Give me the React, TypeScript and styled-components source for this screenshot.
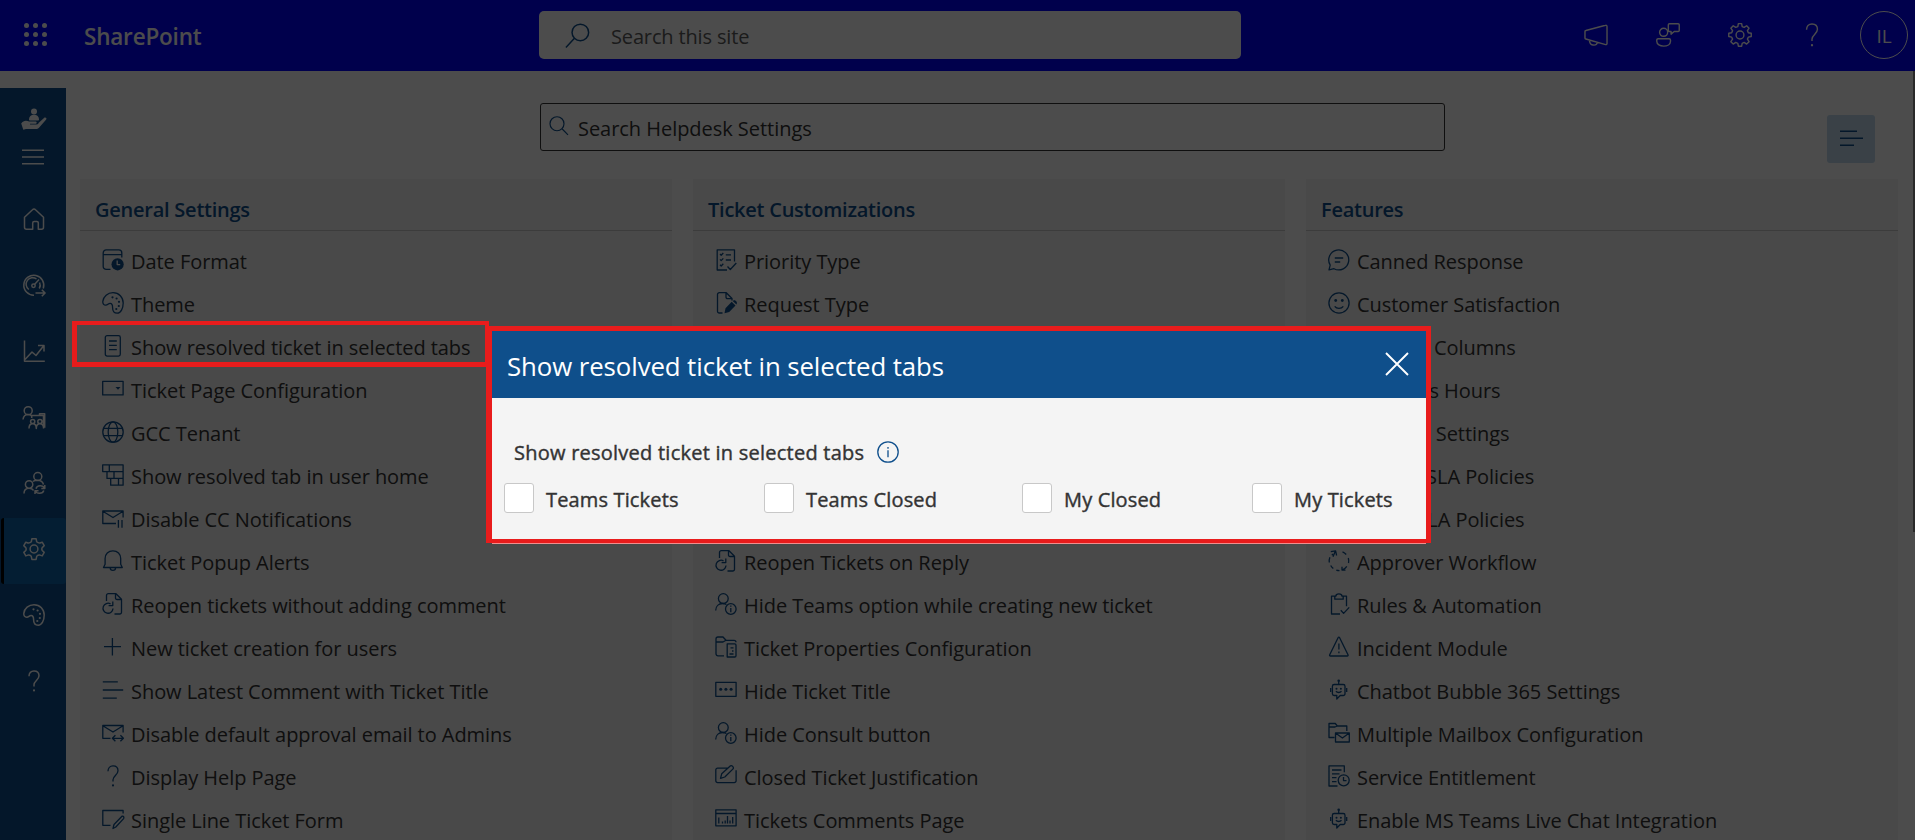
import React from "react";
import styled, { createGlobalStyle } from "styled-components";

const brand = "#0f4f8c";

const GlobalStyle = createGlobalStyle`
  html, body { margin: 0; padding: 0; overflow: hidden; }
  *, *::before, *::after { box-sizing: border-box; }
  body { font-family: "Open Sans", "Noto Sans", sans-serif; background: #fff; }
  svg { display: block; flex: none; overflow: visible; }
`;

/* ---------- icons ---------- */

const Svg = styled.svg<{ $w?: number }>`
  fill: none;
  stroke: currentColor;
  stroke-width: ${(p) => p.$w ?? 1.3};
  stroke-linejoin: round;
  .solid { fill: currentColor; stroke: none; }
  .cut { stroke: #f4f4f4; }
`;

const palette = (
  <>
    <path d="M.8 9.4C1.3 4.4 5.8.7 11 .7c6 0 10.2 4.600 10.200 10.400 0 5.200-2.400 10.100-6 10.100-3.500 0-4.600-2.600-4.600-5.500 0-3.200-.9-4.300-2.500-4.300-2 0-2.300 1.800-4.300 1.800C1.700 13.200.6 11.500.8 9.400z" />
    <g className="solid">
      <circle cx="10.500" cy="5.300" r="1.100" /><circle cx="14.600" cy="6.500" r="1.100" /><circle cx="17" cy="9.800" r="1.100" />
      <circle cx="16.800" cy="14" r="1.100" /><circle cx="14.300" cy="17" r="1.100" />
    </g>
  </>
);
const question = (
  <>
    <path d="M6 6.300C6 3 8 .9 11 .9s5 2 5 4.900c0 4.200-5 5.200-5 9v1.600" />
    <circle className="solid" cx="11" cy="20.400" r="1.050" />
  </>
);
const reopen = (
  <>
    <path d="M4.500 8V2.500A1.800 1.800 0 0 1 6.300.7H14l5.500 5.500v13a1.800 1.800 0 0 1-1.800 1.800H12.500M13.500.9v4c0 1 .6 1.600 1.600 1.600h4" />
    <path d="M8.500 10.900A5 5 0 1 0 11 15.500M10.800 8.600v4H6.600" />
  </>
);
const personInfo = (
  <>
    <circle cx="8.300" cy="5.600" r="4.900" />
    <path d="M.7 17.500c0-4.300 3-7 7-7 1.500 0 2.700.4 3.700 1" />
    <circle cx="15.800" cy="16" r="5.300" />
    <path d="M15.800 15v4.200M15.800 12.600v1.200" />
  </>
);
const bot = (
  <>
    <path d="M6.200 5.500h9a1.800 1.800 0 0 1 1.800 1.800v7.400a1.800 1.800 0 0 1-1.800 1.800h-3L8.800 20v-3.500H6.200a1.800 1.800 0 0 1-1.800-1.800V7.300a1.800 1.800 0 0 1 1.800-1.800z" />
    <path d="M10.700 5.500V2.500M2.700 9v4M18.700 9v4M7.900 12.300c1.400 1.600 4.200 1.600 5.600 0" />
    <g className="solid"><circle cx="10.700" cy="1.700" r="1.300" /><circle cx="8.500" cy="9.700" r="1" /><circle cx="12.900" cy="9.700" r="1" /></g>
  </>
);

const icons: Record<string, React.ReactNode> = {
  palette, question, reopen, personInfo, bot,
  date: (
    <>
      <path d="M8.500 20.400H4.200A3 3 0 0 1 1.200 17.400V3.900a3 3 0 0 1 3-3h12.600a3 3 0 0 1 3 3V8.500M1.200 5.600h18.600" />
      <circle className="solid" cx="15.600" cy="15.300" r="6.100" />
      <path className="cut" d="M15.200 11.600v4h3" />
    </>
  ),
  doc: (
    <>
      <rect x="3.300" y=".7" width="15" height="20.400" rx="1.800" />
      <path d="M7 6h7.800M7 10.300h7.800M7 14.600h7.800" />
    </>
  ),
  dropdown: (
    <>
      <rect x=".7" y="3.300" width="20.400" height="13.600" />
      <path className="solid" d="M13.500 9h5l-2.500 2.700z" />
    </>
  ),
  globe: (
    <>
      <circle cx="11" cy="11" r="10.200" /><ellipse cx="11" cy="11" rx="4.800" ry="10.200" />
      <path d="M1.500 7.300h19M1.500 14.700h19" />
    </>
  ),
  bricks: <path d="M.7.8h20.400v20.400H8.700v-6.800H5V7.600H.7zM.7 7.600h20.400M5 14.400h16.100M7.300.8v6.800M12 7.600v6.800M16.500 14.400v6.800" />,
  mailPause: <path d="M14 16.500H.8V4h20.300v6.500M.8 4.200l10.200 6.300 10.100-6.300M16.400 13v7.800M20 13v7.800" />,
  bell: <path d="M1.500 17.500h18.800l-1.600-3.200V8.500C18.700 4 15.500.9 10.900.9S3.100 4 3.100 8.500v5.800zM8.200 17.800c0 3.500 5.400 3.500 5.400 0" />,
  plus: <path d="M10.400 2v17.500M2 10.700h17" />,
  lines: <path d="M.8 2.800h15M.8 11h20.400M.8 19.200h14" />,
  mailArrows: <path d="M8.500 16.300H.8V3.500h20.300v7M.8 3.700l10.200 6.300 10.100-6.300M10.700 16.300h10.500M13.400 13.300l-3 3 3 3M18.400 13.300l3 3-3 3" />,
  windowPen: <path d="M8.500 17.300H.8V2.500h20.300v3M11 20.500l1-4 8-8.300c1.800-.5 2.200 1.500 1.600 2.400L13.800 19z" />,
  checklist: (
    <path d="M12 21H2.200V.8h17.300V12.500M5 5l1.200 1.200L8.300 4M5 10.400l1.200 1.200 2.100-2.200M5 15.800 6.200 17l2.100-2.200M10.800 5.800H16M10.800 11H16M12.500 17.500l2.800 3 6-6.500" />
  ),
  docPen: (
    <>
      <path d="M7.500 21H4.300a1.800 1.800 0 0 1-1.800-1.800V2.500A1.800 1.800 0 0 1 4.300.7h7L17 6.500v2M11 .9v4.200c0 1 .6 1.600 1.600 1.600H17" />
      <path className="solid" d="M9.500 21.200l1-5 6.200-6.500 3.800 3.800-6.300 6.400zM17.700 8.900c2-2 5.600 1.200 3.700 3.500z" />
    </>
  ),
  folderDoc: <path d="M9 19.800H3a2 2 0 0 1-2-2V3a2 2 0 0 1 2-2h5l3 3.300h8a2 2 0 0 1 2 2M1 6h7l3-1.700M12.200 7.800h7.500a1.300 1.300 0 0 1 1.300 1.300v10.600a1.300 1.300 0 0 1-1.300 1.300h-7.500zM15.500 11.800h3M17 15h1.500M14.500 18h4" />,
  dots: (
    <>
      <rect x=".8" y="3.300" width="20.300" height="14" />
      <g className="solid"><circle cx="5.700" cy="10.300" r="1.500" /><circle cx="10.900" cy="10.300" r="1.500" /><circle cx="16.100" cy="10.300" r="1.500" /></g>
    </>
  ),
  edit: <path d="M13 3.200H2.600A1.800 1.800 0 0 0 .8 5v10.800a1.800 1.800 0 0 0 1.800 1.800h16.700a1.800 1.800 0 0 0 1.800-1.800V5.200M5.500 13.300l1.200-4.500 8.800-8c1.600-.5 3.300 1.200 2.800 2.800L9.800 12z" />,
  chart: <path d="M.8 1.800h20.300v16H.8zM.8 5.500h20.300M3.800 15.500V9.500M7.500 15.500v-2M10.200 15.500v-3M12.500 15.500V8M15 15.500v-3M17.700 15.500V9" />,
  chat: <path d="M1 20.800l1.200-4.700A10 10 0 1 1 6 19.700zM6.800 9h8.400M6.800 13h5.400" />,
  smile: (
    <>
      <circle cx="11" cy="11" r="10.100" /><path d="M6.700 14.300c2 2.800 6.600 2.800 8.600 0" />
      <circle className="solid" cx="7.700" cy="8.500" r="1.400" /><circle className="solid" cx="14.300" cy="8.500" r="1.400" />
    </>
  ),
  cycle: (
    <>
      <path d="M7.300 1.200 5 6.800M2.800 1.700l4.800-.9 1 4.700" />
      <path d="M14.500 1.900a9.800 9.800 0 0 1 3.700 2.600M20.300 8a9.800 9.800 0 0 1 .2 5M18.800 16.300a9.800 9.800 0 0 1-4.500 3.600M14 16.800v3.300h3.500M11.500 20.700a9.800 9.800 0 0 1-3.200-.5M5.300 18.500a9.800 9.800 0 0 1-2.600-3M1.300 12.500a9.800 9.800 0 0 1 .6-5.200M5.200 3.900 3.800 5.200" />
    </>
  ),
  clipboard: <path d="M12 21H3.500V3.200h4.300C8 .2 13.800.2 14 3.200h4.500v10M6.800 3.200v3h8.400v-3M12.800 17.200l2.800 3.200 5.600-6" />,
  warning: <path d="M10.200 1.500c.3-.6 1-.6 1.300 0L20 18.700c.4.8 0 1.300-.8 1.300H2.500c-.8 0-1.200-.5-.8-1.300zM10.900 7.500v6M10.900 15.500v1.800" />,
  folderMail: <path d="M6.500 15.500H1V1.500h6.300l2 2.500h9.500v5M1 5h6l2.300-1M7.500 11h13.800v9H7.500zM7.500 11l6.900 5 6.900-5" />,
  docClock: <path d="M9.500 21H1V.8h15.300v6.500M4 5h9.500M4 8.800h7.500M4 12.700h4.500M4 16.600h4.500M21.200 15.300a5.500 5.500 0 1 1-11 0 5.500 5.500 0 0 1 11 0zM15.500 12v3.600h3" />,
  home: <path d="M1.500 9.300 9.500 1.700c.9-.9 2.100-.9 3 0l8 7.600v9.900a2 2 0 0 1-2 2h-3.200v-6.300a1.500 1.500 0 0 0-1.500-1.500h-2.600a1.500 1.500 0 0 0-1.500 1.500v6.300H3.500a2 2 0 0 1-2-2z" />,
  gauge: (
    <>
      <path d="M20.300 14.500A10 10 0 1 0 11 21.300M5.800 15.500A6.500 6.500 0 0 1 13.500 5M16.600 8.500a6.500 6.500 0 0 1-.3 6M11.500 10.500l4.500-5M12.500 19h9.500M18.800 15.700l3.300 3.300-3.300 3.300" />
      <circle cx="10.500" cy="11.700" r="1.700" />
    </>
  ),
  trend: <path d="M1.500.5v20.700h20.300M2 19.500 9 12l4 3.500L20.500 6M15 5.500h6v6" />,
  team: <path d="M9.200 4.700a4 4 0 1 1-8 0 4 4 0 0 1 8 0zM0 13.500c.4-3.500 2.600-5 5.200-5 2 0 3.300.8 4 2M8.700 12V9.500h11.800v11M16.500 9.500V7.700h5.200v14M11.800 15.500a2.100 2.100 0 1 1-4.200 0 2.100 2.100 0 0 1 4.200 0zM19 15.500a2.100 2.100 0 1 1-4.200 0 2.100 2.100 0 0 1 4.200 0zM6 22.500c0-3 1.500-4.700 3.700-4.700s3.600 1.700 3.600 4.700c0-3 1.500-4.700 3.600-4.700s3.700 1.700 3.700 4.700" />,
  peopleSync: <path d="M18.800 4.500a4 4 0 1 1-8 0 4 4 0 0 1 8 0zM9.800 12.500a3.700 3.700 0 1 1-7.400 0 3.700 3.700 0 0 1 7.400 0zM1 21.500c0-3.300 2-5.300 5-5.300 2.200 0 3.700.8 4.500 2.300M10 9.500c1-.8 2.500-1.200 4.500-1.200 3.200 0 5.300 1.500 6 4.200M21.500 16.200c-1.500-3.200-7.500-3.200-8.500.5M21.800 13v3.500h-3.500M12.300 19c1.500 3.200 7.300 3.200 8.500-.5M12 22v-3.300h3.500" />,
  gear: (
    <>
      <circle cx="11" cy="11" r="3.900" />
      <path d="M8.900.7h4.200l.6 3.100c.9.9 2 1.400 3.300 1.200l2.200-.8 2 3.500-2 1.900c-.6 1-.6 1.900 0 2.900l2 1.900-2 3.500-2.200-.8c-1.300-.2-2.400.3-3.300 1.200l-.6 3.100H8.900l-.6-3.100c-.9-.9-2-1.400-3.300-1.200l-2.200.8-2-3.500 2-1.900c.6-1 .6-1.900 0-2.900l-2-1.900 2-3.500 2.200.8c1.300.2 2.400-.3 3.300-1.200z" />
    </>
  ),
  cog: (
    <>
      <circle cx="11" cy="11" r="3.600" />
      <path d="M9.500.6h3l.5 2.700 1.800.7 2.300-1.500 2.200 2.200-1.500 2.300.8 1.900 2.700.5v3l-2.700.6-.8 1.800 1.500 2.300-2.200 2.200-2.300-1.500-1.800.8-.5 2.700h-3L9 18.600l-1.900-.8-2.300 1.500-2.200-2.200 1.600-2.300-.8-1.800-2.700-.6v-3l2.700-.5.8-1.900-1.600-2.300 2.200-2.200L7.100 4 9 3.300z" />
    </>
  ),
  hand: (
    <g className="solid">
      <circle cx="12" cy="3.500" r="3" />
      <path d="M7 11.500c0-3 2-4.800 5-4.800s5 1.800 5 4.800c0 .6-.5 1-1 1H8c-.6 0-1-.4-1-1z" />
      <path d="M-.8 15.500c2-3 5-3.300 8-2h6c2 0 2 2.200 0 2.300H8v.7h6.500c1.500 0 2-.8 2-1.500l5.500-5c1.200-1 3.200 0 2.200 1.500l-7 8c-1 1-2 1.500-3.500 1.500H4l-2.700.8z" />
    </g>
  ),
  menu: <path d="M0 4.200h22M0 11h22M0 17.800h22" />,
  megaphone: (
    <path d="M1.700 6.900 19.800 2.100a1 1 0 0 1 1.300 1V18.800a1 1 0 0 1-1.300 1L1.700 14.700a1 1 0 0 1-.8-1V7.900a1 1 0 0 1 .8-1zM5 15.800c0 5.300 6.300 5.800 7.300 2" />
  ),
  feedback: (
    <path d="M10.700 8.500a3.700 3.700 0 1 1-7.400 0 3.700 3.700 0 0 1 7.400 0zM2 14.400h10a1.300 1.300 0 0 1 1.300 1.300v1c0 6-12.600 6-12.600 0v-1A1.300 1.300 0 0 1 2 14.400zM12.300.7h8a1 1 0 0 1 1 1v5.100a1 1 0 0 1-1 1h-3.600l-2.900 2.400V7.800h-1.500a1 1 0 0 1-1-1V1.700a1 1 0 0 1 1-1z" />
  ),
  searchLeft: <path d="M20.800 8.300a7.300 7.300 0 1 1-14.600 0 7.300 7.300 0 0 1 14.600 0zM8.300 13.500.8 21.500" />,
  searchRight: <path d="M16.500 8.500a7.700 7.700 0 1 1-15.400 0 7.700 7.700 0 0 1 15.400 0zM14.300 14l6.600 6.700" />,
  close: <path d="M0 0l22 22M22 0 0 22" />,
  info: (
    <>
      <circle cx="11" cy="11" r="10.200" /><path d="M11 9.300v7M11 6v1.700" />
    </>
  ),
};

const Icon = ({ name, size = 22, w }: { name: string; size?: number; w?: number }) => (
  <Svg width={size} height={size} viewBox="0 0 22 22" $w={w}>{icons[name]}</Svg>
);

/* ---------- top bar ---------- */

const Page = styled.div`
  width: 100%;
  height: 840px;
  overflow: hidden;
  display: flex;
  flex-direction: column;
  color: #333;
`;
const TopBar = styled.header`
  height: 71px;
  flex: none;
  display: grid;
  grid-template-columns: 539px 702px 1fr;
  align-items: center;
  background: #00f;
  color: #fff;
`;
const BrandArea = styled.div`
  display: flex;
  align-items: center;
  gap: 37px;
  padding-left: 24px;
`;
const Waffle = styled.span`
  display: grid;
  grid-template-columns: repeat(3, 5px);
  gap: 4px;
  margin-bottom: 2px;
  i { width: 5px; height: 5px; border-radius: 50%; background: #fff; }
`;
const BrandName = styled.span`
  font-size: 22.500px;
  font-weight: 600;
  line-height: 30px;
  letter-spacing: -0.200px;
  padding-top: 3px;
`;
const SiteSearch = styled.div`
  height: 48px;
  display: flex;
  align-items: center;
  gap: 21px;
  margin-bottom: 1px;
  padding-left: 26px;
  border-radius: 5px;
  background: #fff;
  color: ${brand};
  font-size: 20px;
  letter-spacing: -0.150px;
  span { color: #5c5c5c; padding-top: 3px; }
`;
const TopActions = styled.div`
  display: flex;
  align-items: center;
  justify-content: flex-end;
  gap: 48px;
  padding-right: 7px;
  margin-bottom: 1px;
`;
const Avatar = styled.span`
  width: 48px;
  height: 48px;
  margin-left: -12px;
  border: 1px solid #fff;
  border-radius: 50%;
  display: grid;
  place-items: center;
  padding-top: 1px;
  font-size: 19px;
`;

/* ---------- side navigation ---------- */

const Main = styled.div`
  flex: 1;
  min-height: 0;
  display: flex;
`;
const SideNav = styled.nav`
  width: 66px;
  flex: none;
  margin-top: 17px;
  padding-top: 20px;
  background: ${brand};
  color: #fff;
  display: flex;
  flex-direction: column;
  align-items: center;
`;
const NavHead = styled.div`
  display: flex;
  flex-direction: column;
  gap: 16px;
  margin-bottom: 20px;
`;
const NavItem = styled.a<{ $active?: boolean }>`
  width: 65px;
  height: 66px;
  flex: none;
  align-self: flex-end;
  display: grid;
  place-items: center;
  border-radius: 3px;
  border-left: 3px solid ${(p) => (p.$active ? "#000" : "transparent")};
  padding: 0 3px 4px 0;
  background: ${(p) => (p.$active ? "#0f65aa" : "transparent")};
`;

/* ---------- settings ---------- */

const Content = styled.main`
  flex: 1;
  min-width: 0;
  padding: 32px 17px 0 14px;
  display: flex;
  flex-direction: column;
`;
const Toolbar = styled.div`
  height: 76px;
  flex: none;
  display: flex;
  justify-content: space-between;
  align-items: flex-start;
  padding: 0 23px 0 460px;
`;
const SettingsSearch = styled.div`
  width: 905px;
  height: 48px;
  border: 1px solid #333;
  border-radius: 3px;
  display: flex;
  align-items: center;
  gap: 9px;
  padding-left: 8px;
  color: ${brand};
  font-size: 20px;
  letter-spacing: -0.040px;
  svg { margin-bottom: 2px; }
  span { color: #333; padding-top: 3px; }
`;
const ListButton = styled.button`
  width: 48px;
  height: 48px;
  margin-top: 12px;
  border: 0;
  border-radius: 3px;
  padding: 0 0 2px;
  background: #c1d9ee;
  color: ${brand};
  display: grid;
  place-items: center;
`;
const Columns = styled.div`
  flex: 1;
  min-height: 0;
  display: grid;
  grid-template-columns: repeat(3, 592px);
  gap: 21px;
`;
const Panel = styled.section`
  background: #f4f4f4;
  overflow: hidden;
`;
const PanelTitle = styled.h2`
  margin: 0;
  height: 52px;
  border-bottom: 1px solid #c8c8c8;
  padding: 17px 0 0 15px;
  font-size: 20px;
  line-height: 27px;
  font-weight: 600;
  letter-spacing: -0.240px;
  color: ${brand};
`;
const Rows = styled.ul`
  list-style: none;
  margin: 0;
  padding: 8px 0 0 22px;
`;
const Row = styled.li`
  height: 43px;
  display: flex;
  align-items: center;
  gap: 7px;
  color: ${brand};
  font-size: 20px;
  letter-spacing: -0.050px;
  white-space: nowrap;
  svg { margin-bottom: 2px; }
  span { color: #333; padding-top: 2px; }
`;

/* ---------- overlay and dialog ---------- */

const Backdrop = styled.div`
  position: absolute;
  inset: 0;
  height: 840px;
  background: rgba(0, 0, 0, 0.7);
`;
const ScrollThumb = styled.div`
  position: absolute;
  right: 0;
  top: 71px;
  width: 2px;
  height: 461px;
  background: #8a8a8a;
`;
const Highlight = styled.div`
  position: absolute;
  left: 72px;
  top: 321px;
  width: 417px;
  height: 46px;
  border: solid #e81c1c;
  border-width: 4px 4px 5px 5px;
`;
const Dialog = styled.div`
  position: absolute;
  left: 486px;
  top: 326px;
  width: 945px;
  height: 217px;
  border: 5px solid #e81c1c;
  border-left-width: 6px;
  border-bottom-width: 4px;
  background: #f4f4f4;
  color: #333;
  &::after {
    content: "";
    position: absolute;
    left: 0;
    right: 0;
    bottom: -5px;
    height: 1px;
    background: #f08e8e;
  }
`;
const DialogHeader = styled.div`
  height: 67px;
  display: flex;
  align-items: center;
  justify-content: space-between;
  padding: 2px 18px 0 15px;
  background: #0f4f8b;
  color: #fff;
  font-size: 25.800px;
  letter-spacing: -0.090px;
  svg { margin-bottom: 4px; }
`;
const FieldLabel = styled.div`
  display: flex;
  align-items: center;
  gap: 13px;
  height: 28px;
  margin: 40px 0 0 22px;
  font-size: 20px;
  letter-spacing: 0.240px;
  span { -webkit-text-stroke: 0.4px #333; }
  svg { color: ${brand}; }
`;
const Options = styled.div`
  display: grid;
  grid-template-columns: 260px 258px 230px 150px;
  margin: 17px 0 0 12px;
`;
const Option = styled.label`
  height: 30px;
  display: flex;
  align-items: center;
  gap: 12px;
  font-size: 20px;
  letter-spacing: 0.150px;
  white-space: nowrap;
  span { -webkit-text-stroke: 0.4px #333; padding-top: 2px; }
`;
const Box = styled.i`
  width: 30px;
  height: 30px;
  border: 1px solid #c8c8c8;
  border-radius: 3px;
  background: #fff;
`;

type Item = [icon: string, label: string];

const panels: { title: string; items: Item[] }[] = [
  {
    title: "General Settings",
    items: [
      ["date", "Date Format"],
      ["palette", "Theme"],
      ["doc", "Show resolved ticket in selected tabs"],
      ["dropdown", "Ticket Page Configuration"],
      ["globe", "GCC Tenant"],
      ["bricks", "Show resolved tab in user home"],
      ["mailPause", "Disable CC Notifications"],
      ["bell", "Ticket Popup Alerts"],
      ["reopen", "Reopen tickets without adding comment"],
      ["plus", "New ticket creation for users"],
      ["lines", "Show Latest Comment with Ticket Title"],
      ["mailArrows", "Disable default approval email to Admins"],
      ["question", "Display Help Page"],
      ["windowPen", "Single Line Ticket Form"],
    ],
  },
  {
    title: "Ticket Customizations",
    items: [
      ["checklist", "Priority Type"],
      ["docPen", "Request Type"],
      ["", ""], ["", ""], ["", ""], ["", ""], ["", ""],
      ["reopen", "Reopen Tickets on Reply"],
      ["personInfo", "Hide Teams option while creating new ticket"],
      ["folderDoc", "Ticket Properties Configuration"],
      ["dots", "Hide Ticket Title"],
      ["personInfo", "Hide Consult button"],
      ["edit", "Closed Ticket Justification"],
      ["chart", "Tickets Comments Page"],
    ],
  },
  {
    title: "Features",
    items: [
      ["chat", "Canned Response"],
      ["smile", "Customer Satisfaction"],
      ["doc", "Custom Columns"],
      ["docClock", "Business Hours"],
      ["folderMail", "Mailbox Settings"],
      ["checklist", "Urgent SLA Policies"],
      ["checklist", "Ticket SLA Policies"],
      ["cycle", "Approver Workflow"],
      ["clipboard", "Rules & Automation"],
      ["warning", "Incident Module"],
      ["bot", "Chatbot Bubble 365 Settings"],
      ["folderMail", "Multiple Mailbox Configuration"],
      ["docClock", "Service Entitlement"],
      ["bot", "Enable MS Teams Live Chat Integration"],
    ],
  },
];

const navItems = ["home", "gauge", "trend", "team", "peopleSync", "gear", "palette", "question"];
const options = ["Teams Tickets", "Teams Closed", "My Closed", "My Tickets"];

export default function App() {
  return (
    <>
      <GlobalStyle />
      <Page>
        <TopBar>
          <BrandArea>
            <Waffle>{Array.from({ length: 9 }, (_, i) => <i key={i} />)}</Waffle>
            <BrandName>SharePoint</BrandName>
          </BrandArea>
          <SiteSearch><Icon name="searchLeft" size={25} /><span>Search this site</span></SiteSearch>
          <TopActions>
            <Icon name="megaphone" size={24} />
            <Icon name="feedback" size={24} />
            <Icon name="cog" size={24} />
            <Icon name="question" size={24} />
            <Avatar>IL</Avatar>
          </TopActions>
        </TopBar>
        <Main>
          <SideNav>
            <NavHead>
              <Icon name="hand" />
              <Icon name="menu" w={1.5} />
            </NavHead>
            {navItems.map((n) => (
              <NavItem key={n} $active={n === "gear"}><Icon name={n} w={1.5} /></NavItem>
            ))}
          </SideNav>
          <Content>
            <Toolbar>
              <SettingsSearch><Icon name="searchRight" size={20} /><span>Search Helpdesk Settings</span></SettingsSearch>
              <ListButton><Svg width={24} height={16} viewBox="0 0 24 16" $w={1.6}><path d="M1 1.300h17M1 8.300h23M1 15.300h14" /></Svg></ListButton>
            </Toolbar>
            <Columns>
              {panels.map((p) => (
                <Panel key={p.title}>
                  <PanelTitle>{p.title}</PanelTitle>
                  <Rows>
                    {p.items.map(([icon, label], i) => (
                      <Row key={i}>{icon && <Icon name={icon} />}<span>{label}</span></Row>
                    ))}
                  </Rows>
                </Panel>
              ))}
            </Columns>
          </Content>
        </Main>
      </Page>
      <ScrollThumb />
      <Backdrop />
      <Highlight />
      <Dialog role="dialog">
        <DialogHeader>
          <span>Show resolved ticket in selected tabs</span>
          <Icon name="close" w={1.900} />
        </DialogHeader>
        <FieldLabel><span>Show resolved ticket in selected tabs</span><Icon name="info" /></FieldLabel>
        <Options>
          {options.map((o) => <Option key={o}><Box /><span>{o}</span></Option>)}
        </Options>
      </Dialog>
    </>
  );
}
